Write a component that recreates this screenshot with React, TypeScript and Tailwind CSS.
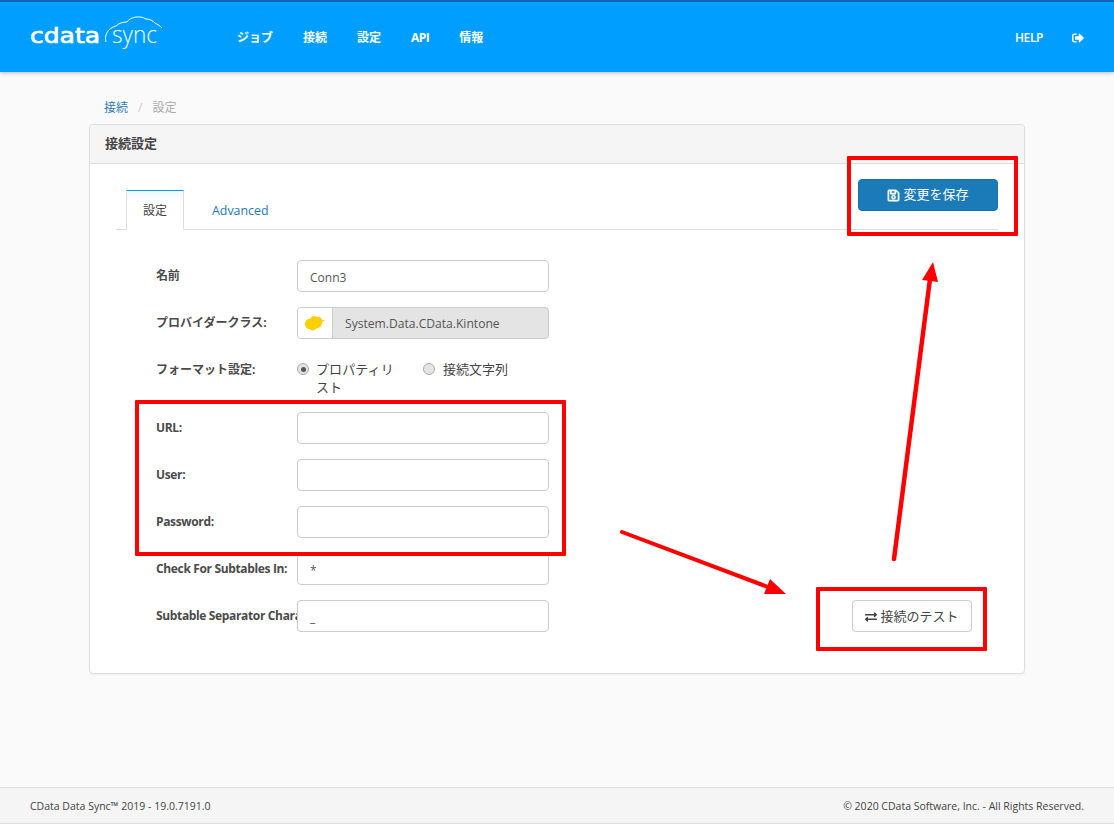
import React from "react";
import { FaRegSave, FaExchangeAlt, FaSignOutAlt } from "react-icons/fa";

const font = { fontFamily: '"Open Sans","Noto Sans CJK JP",sans-serif' };

function Logo() {
  return (
    <svg width="134" height="40" viewBox="0 0 134 40" className="block overflow-visible" aria-label="cdata sync">
      <text x="0" y="26" fill="#fff" stroke="#fff" strokeWidth="0.7" fontFamily="DejaVu Sans" fontSize="21" textLength="70" lengthAdjust="spacingAndGlyphs">cdata</text>
      <text x="82" y="26" fill="#fff" fontFamily="Open Sans" fontWeight="300" fontSize="24" textLength="45" lengthAdjust="spacingAndGlyphs">sync</text>
      <path d="M76 25 C74 18 78 11 86 9 C89 6 93 5 97 5 C100 0 110 -2 116 2 C120 2 123 4 125 6 C127 7 130 9 132 11" fill="none" stroke="#fff" strokeWidth="1" />
    </svg>
  );
}

function Field({ label, value }: { label: string; value?: string }) {
  return (
    <div className="mb-[15px] flex h-8 last:mb-0">
      <label className="w-[141px] shrink-0 overflow-hidden whitespace-nowrap text-[12px] font-bold leading-[32px] tracking-[-0.35px] text-[#4a4a4a]">{label}</label>
      <div className="h-8 w-[252px] rounded-[4px] border border-[#ccc] bg-white px-3 text-[12px] leading-[34px] text-[#555]">{value}</div>
    </div>
  );
}

function Radio({ checked }: { checked?: boolean }) {
  return (
    <span className="mt-[3px] flex h-3 w-3 shrink-0 items-center justify-center rounded-full border border-[#aaa] bg-[#e4e4e4]">
      {checked && <span className="h-[5px] w-[5px] rounded-full bg-[#555]" />}
    </span>
  );
}

export default function App() {
  return (
    <div className="relative flex h-[824px] flex-col overflow-hidden bg-[#fafafa] text-[#444]" style={font}>
      <header className="z-10 flex h-[72px] shrink-0 items-center border-t-2 border-[#0a68b4] bg-[#009fff] px-[30px] text-white shadow-[0_1px_4px_rgba(0,0,0,0.25)]">
        <div className="w-[207px] shrink-0"><Logo /></div>
        <nav className="flex items-center gap-[30px] pt-[2px] text-[12px] font-bold">
          <span>ジョブ</span><span>接続</span><span>設定</span><span className="tracking-[-0.5px]">API</span><span>情報</span>
        </nav>
        <div className="ml-auto flex items-center gap-[29px] pt-[2px] text-[12px] font-semibold">
          <span className="tracking-[-0.4px]">HELP</span>
          <FaSignOutAlt className="h-3 w-3" />
        </div>
      </header>

      <main className="flex-1 pl-[89px]">
        <div className="flex h-[52px] items-end gap-[10px] pb-[7px] pl-[15px] text-[12px] leading-[18px]">
          <span className="text-[#337ab7]">接続</span>
          <span className="text-[#ccc]">/</span>
          <span className="text-[#aaa]">設定</span>
        </div>
        <section className="w-[936px] rounded-[4px] border border-[#ddd] bg-white shadow-[0_1px_2px_rgba(0,0,0,0.04)]">
          <div className="flex h-[39px] items-center rounded-t-[4px] border-b border-[#ddd] bg-[#f5f5f5] px-[15px] text-[13px] font-bold text-[#444]">接続設定</div>
          <div className="ml-[26px] flex h-[66px] w-[882px] justify-between border-b border-[#ddd]">
            <div className="ml-[10px] flex items-end">
              <div className="-mb-px h-[40px] w-[58px] border-x border-b border-t border-x-[#ddd] border-b-white border-t-[#009fff] bg-gradient-to-b from-[#f0f9ff] to-white to-30% text-center text-[12px] leading-[40px] text-[#444]">設定</div>
              <div className="h-[40px] pl-[28px] text-[12.4px] leading-[44px] text-[#1a7ab8]">Advanced</div>
            </div>
            <button className="mt-[15px] flex h-8 w-[140px] items-center justify-center gap-[3px] rounded-[4px] border border-[#1a6fa6] bg-[#1b7bb8] text-[13px] text-white">
              <FaRegSave className="h-[13px] w-[13px] stroke-[20px]" />変更を保存
            </button>
          </div>
          <div className="flex items-end justify-between pb-[41px] pl-[66px] pr-[52px] pt-[30px]">
            <div className="w-[393px]">
              <Field label="名前" value="Conn3" />
              <div className="mb-[15px] flex h-8">
                <label className="w-[141px] shrink-0 text-[12px] font-bold leading-[32px] text-[#4a4a4a]">プロバイダークラス:</label>
                <div className="flex h-8 w-[252px] overflow-hidden rounded-[4px] border border-[#ccc] bg-[#e4e4e4]">
                  <div className="flex w-[35px] shrink-0 items-center justify-center border-r border-[#ccc] bg-white">
                    <svg width="22" height="18" viewBox="0 0 22 18"><path d="M1 10 C1 7 3 5 6 5 C7 2 11 1 13 3 C15 2 18 4 18 6 L21 6 L18 8 C18 12 16 14 13 14 C11 17 7 17 6 15 C3 15 1 13 1 10 Z" fill="#ffcf00" /></svg>
                  </div>
                  <div className="pl-3 text-[12.1px] leading-[32px] text-[#555]">System.Data.CData.Kintone</div>
                </div>
              </div>
              <div className="mb-[15px] flex h-[43px]">
                <label className="w-[141px] shrink-0 text-[12px] font-bold leading-[32px] text-[#4a4a4a]">フォーマット設定:</label>
                <div className="flex pt-[6px] text-[13px] leading-[18px] text-[#444]">
                  <div className="flex w-[126px] gap-[7px]"><Radio checked /><span className="w-[80px] tracking-[0.1px]">プロパティリスト</span></div>
                  <div className="flex gap-2"><Radio /><span>接続文字列</span></div>
                </div>
              </div>
              <Field label="URL:" />
              <Field label="User:" />
              <Field label="Password:" />
              <Field label="Check For Subtables In:" value="*" />
              <Field label="Subtable Separator Character:" value="_" />
            </div>
            <button className="flex h-8 w-[120px] items-center justify-center gap-[3px] rounded-[4px] border border-[#ccc] bg-white pt-px text-[13px] text-[#444]">
              <FaExchangeAlt className="h-3 w-3" />接続のテスト
            </button>
          </div>
        </section>
      </main>

      <footer className="flex h-[37px] shrink-0 items-center justify-between border-y border-[#ddd] bg-[#f5f5f5] px-[30px] pt-[2px] text-[10.5px] text-[#444]">
        <span>CData Data Sync™ 2019 - 19.0.7191.0</span>
        <span>© 2020 CData Software, Inc. - All Rights Reserved.</span>
      </footer>

      <div className="absolute left-[847px] top-[156px] h-[80px] w-[171px] rounded-[1px] border-[4px] border-[#f00]" />
      <div className="absolute left-[135px] top-[400px] h-[156px] w-[431px] rounded-[1px] border-[4px] border-[#f00]" />
      <div className="absolute left-[816px] top-[587px] h-[64px] w-[171px] rounded-[1px] border-[4px] border-[#f00]" />
      <svg className="absolute left-0 top-0" width="1114" height="824" viewBox="0 0 1114 824">
        <line x1="622" y1="532" x2="768" y2="587" stroke="#f00" strokeWidth="4" strokeLinecap="round" />
        <polygon points="770,579 764,594 786,594" fill="#f00" />
        <line x1="894" y1="559" x2="930" y2="279" stroke="#f00" strokeWidth="4.5" strokeLinecap="round" />
        <polygon points="933,262 922,280 938,282" fill="#f00" />
      </svg>
    </div>
  );
}
